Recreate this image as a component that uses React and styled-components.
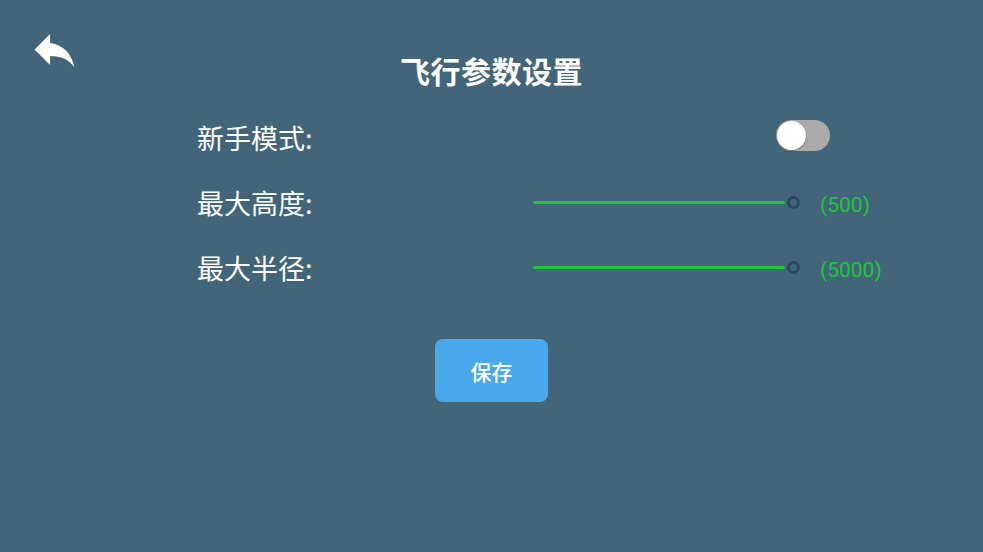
import React, { useState } from 'react';
import styled, { createGlobalStyle } from 'styled-components';

const GlobalStyle = createGlobalStyle`
  html, body {
    margin: 0;
    padding: 0;
    background: #426579;
  }
  body {
    font-family: 'Noto Sans CJK SC', 'Noto Sans', sans-serif;
    color: #ffffff;
  }
`;

const ReplyIcon = () => (
  <svg width="53" height="53" viewBox="0 0 24 24" fill="#ffffff">
    <path d="M10 9V5l-7 7 7 7v-4.1c5 0 8.5 1.6 11 5.1-1-5-4-10-11-11z" />
  </svg>
);

const Settings = () => {
  const [beginner, setBeginner] = useState(false);
  const height = 500;
  const radius = 5000;

  return (
    <St.Page>
      <St.Header>
        <St.BackBtn type="button">
          <ReplyIcon />
        </St.BackBtn>
        <St.Title>飞行参数设置</St.Title>
      </St.Header>

      <St.Form>
        <St.Row>
          <St.Label>新手模式:</St.Label>
          <St.Control $width={297} $end $lift={4}>
            <St.Switch type="button" $on={beginner} onClick={() => setBeginner(!beginner)}>
              <St.Knob $on={beginner} />
            </St.Switch>
          </St.Control>
        </St.Row>

        <St.Row>
          <St.Label>最大高度:</St.Label>
          <St.Control $width={267}>
            <St.Track />
            <St.Thumb />
          </St.Control>
          <St.Value>({height})</St.Value>
        </St.Row>

        <St.Row>
          <St.Label>最大半径:</St.Label>
          <St.Control $width={267}>
            <St.Track />
            <St.Thumb />
          </St.Control>
          <St.Value>({radius})</St.Value>
        </St.Row>
      </St.Form>

      <St.Footer>
        <St.SaveBtn type="button">保存</St.SaveBtn>
      </St.Footer>
    </St.Page>
  );
};

export default function App() {
  return (
    <>
      <GlobalStyle />
      <Settings />
    </>
  );
}

const St = {
  Page: styled.div`
    width: 983px;
    height: 552px;
    background: #426579;
    overflow: hidden;
  `,

  Header: styled.header`
    display: grid;
    grid-template-columns: 1fr auto 1fr;
    align-items: start;
    padding: 23px 28px 0;
  `,

  BackBtn: styled.button`
    justify-self: start;
    display: flex;
    padding: 0;
    border: none;
    background: none;
    cursor: pointer;
  `,

  Title: styled.h1`
    margin: 27px 0 0;
    font-size: 30px;
    line-height: 40px;
    font-weight: 700;
    letter-spacing: 0.5px;
    color: #ffffff;
  `,

  Form: styled.section`
    display: flex;
    flex-direction: column;
    padding: 15px 0 0 197px;
  `,

  Row: styled.div`
    display: flex;
    align-items: center;
    height: 65px;
  `,

  Label: styled.span`
    width: 336px;
    font-size: 27px;
    line-height: 36px;
    color: #ffffff;
  `,

  Control: styled.div`
    display: flex;
    align-items: center;
    justify-content: ${(p) => (p.$end ? 'flex-end' : 'flex-start')};
    width: ${(p) => p.$width}px;
    margin-bottom: ${(p) => p.$lift || 0}px;
  `,

  Switch: styled.button`
    position: relative;
    width: 54px;
    height: 31px;
    padding: 0;
    border: none;
    border-radius: 16px;
    background: ${(p) => (p.$on ? '#1ec53c' : '#aaaaaa')};
    cursor: pointer;
  `,

  Knob: styled.span`
    position: absolute;
    top: 1px;
    left: ${(p) => (p.$on ? '24px' : '1px')};
    width: 29px;
    height: 29px;
    border-radius: 50%;
    background: #ffffff;
    box-shadow: 0 1px 2px rgba(0, 0, 0, 0.35);
  `,

  Track: styled.div`
    flex: 1;
    height: 3px;
    border-radius: 2px;
    background: #1ec53c;
  `,

  Thumb: styled.div`
    width: 7px;
    height: 7px;
    margin-left: 2px;
    border-radius: 50%;
    border: 3px solid #2b4a5e;
    background: #426579;
  `,

  Value: styled.span`
    margin: 4px 0 0 20px;
    font-family: Roboto, 'Noto Sans', sans-serif;
    font-size: 21px;
    color: #1ec53c;
  `,

  Footer: styled.div`
    display: flex;
    justify-content: center;
    padding-top: 39px;
  `,

  SaveBtn: styled.button`
    width: 113px;
    height: 63px;
    border: none;
    border-radius: 8px;
    background: #4aa8ec;
    color: #ffffff;
    font-family: 'Noto Sans CJK SC', sans-serif;
    font-size: 21px;
    font-weight: 500;
    cursor: pointer;
  `,
};
